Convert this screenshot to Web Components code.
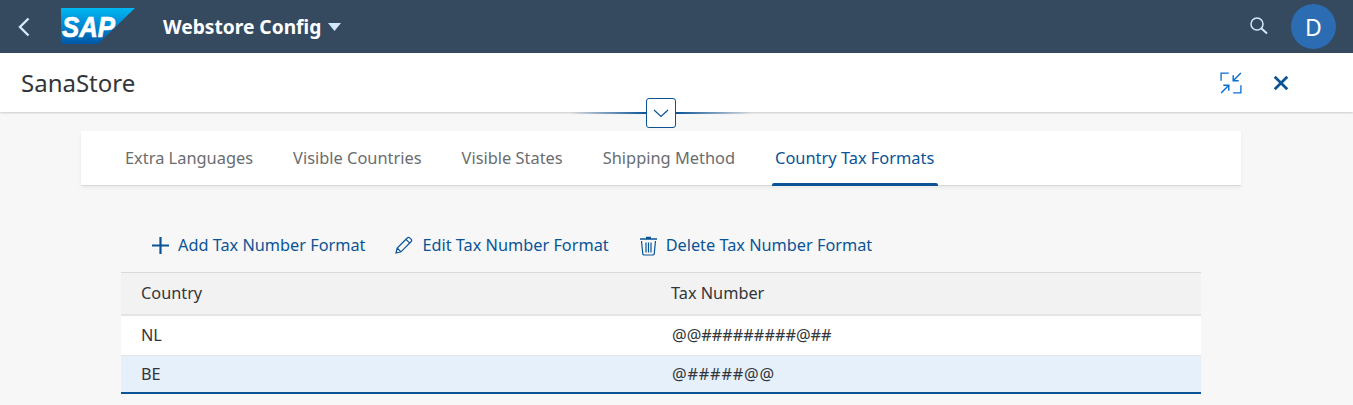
<!DOCTYPE html>
<html>
<head>
<meta charset="utf-8">
<title>Webstore Config</title>
<style>
    html, body { margin: 0; height: 100%; overflow: hidden; }
    body { background: #f7f7f7; font-family: "Noto Sans", "Open Sans", sans-serif; }
</style>
</head>
<body>
<shell-bar></shell-bar>
<page-title>SanaStore</page-title>
<object-tabs></object-tabs>
<tax-actions></tax-actions>
<tax-table></tax-table>

<script>
// Helper to keep the element classes short
function define(name, html) {
    customElements.define(name, class extends HTMLElement {
        constructor() {
            super();
            this.attachShadow({ mode: 'open' });
            const template = document.createElement('template');
            template.innerHTML = html;
            this.shadowRoot.appendChild(template.content.cloneNode(true));
        }
    });
}

define('shell-bar', `
    <style>
        :host { display: flex; align-items: center; height: 53px; background: #354a5f; color: #fff; }
        .back { margin-left: 17px; width: 14px; height: 20px; }
        .logo { margin-left: 30px; width: 74px; height: 36px; margin-top: -1px; }
        .name { margin-left: 28px; font-size: 19.2px; font-weight: 700; }
        .caret { margin-left: 7px; width: 13px; height: 8px; }
        .search { margin-left: auto; width: 20px; height: 20px; margin-top: -1px; }
        .avatar { margin: 0 17px 0 22px; width: 45px; height: 45px; border-radius: 50%; background: #2b6cb3;
                  display: flex; align-items: center; justify-content: center; font-size: 23px; }
    </style>
    <svg class="back" viewBox="0 0 14 20"><path d="M11.5 1.5 3 10l8.5 8.5" fill="none" stroke="#d1e8ff" stroke-width="2.4"/></svg>
    <svg class="logo" viewBox="0 0 74 36">
        <defs><linearGradient id="g" x1="0" y1="0" x2="0" y2="1"><stop offset="0" stop-color="#00b8f1"/><stop offset=".4" stop-color="#0090da"/><stop offset="1" stop-color="#0058a8"/></linearGradient></defs>
        <polygon points="0,0 74,0 37,36 0,36" fill="url(#g)"/>
        <text x="1" y="29" font-family="Liberation Sans" font-size="29" font-weight="700" font-style="italic" fill="#fff" stroke="#fff" stroke-width=".7" textLength="53" lengthAdjust="spacingAndGlyphs">SAP</text>
    </svg>
    <span class="name">Webstore Config</span>
    <svg class="caret" viewBox="0 0 13 8"><polygon points="0,0 13,0 6.5,8" fill="#d1e8ff"/></svg>
    <svg class="search" viewBox="0 0 20 20"><circle cx="8" cy="8" r="6" fill="none" stroke="#d1e8ff" stroke-width="1.5"/><path d="M12.5 12.5 18 17.5" stroke="#d1e8ff" stroke-width="2"/></svg>
    <div class="avatar">D</div>
`);

define('page-title', `
    <style>
        :host { display: flex; align-items: center; position: relative; height: 59px; background: #fff; padding-left: 21px;
                font-size: 24px; color: #32363a; box-shadow: 0 1px 2px rgba(0,0,0,.18); z-index: 1; }
        .tools { margin-left: auto; display: flex; align-items: center; gap: 31px; margin-right: 64px; }
        .collapse { position: absolute; left: 570px; width: 182px; top: 45px; height: 30px; display: flex; align-items: center; justify-content: center; }
        .line { flex: 1; height: 2px; }
        .l { background: linear-gradient(to right, rgba(10,84,150,0), #0a5496); }
        .r { background: linear-gradient(to left, rgba(10,84,150,0), #0a5496); }
        .btn { width: 28px; height: 28px; border: 1px solid #0a5496; border-radius: 3px; background: #fff; display: flex; align-items: center; justify-content: center; }
    </style>
    <slot></slot>
    <div class="tools">
        <svg width="22" height="22" viewBox="0 0 20 20" fill="none" stroke="#0a6ed1" stroke-width="1.2">
            <path d="M1 8V1h7M19 12v7h-7"/><path d="M12 8l7-7M12 3v5h5M8 12l-7 7M3 12h5v5" stroke-width="1.3"/>
        </svg>
        <svg width="16" height="16" viewBox="0 0 14 14"><path d="M1.5 1.5l11 11M12.5 1.5l-11 11" stroke="#0a5496" stroke-width="2.4"/></svg>
    </div>
    <div class="collapse">
        <div class="line l"></div>
        <div class="btn"><svg width="16" height="9" viewBox="0 0 16 9"><path d="M1 1l7 6.5L15 1" fill="none" stroke="#0a5496" stroke-width="1.2"/></svg></div>
        <div class="line r"></div>
    </div>
`);

define('object-tabs', `
    <style>
        :host { display: flex; align-items: stretch; gap: 40px; height: 55px; margin: 19px 112px 0 81px; padding-left: 44px; padding-bottom: 1px; box-sizing: border-box;
                background: #fff; border-bottom: 1px solid #d9d9d9; box-shadow: 0 2px 4px rgba(0,0,0,.06);
                font-size: 16.4px; color: #6a6d70; }
        span { display: flex; align-items: center; position: relative; }
        .on { color: #0a5496; }
        .on::after { content: ''; position: absolute; left: -3px; right: -4px; bottom: -2px; height: 3px; background: #0a5496; border-radius: 2px 2px 0 0; }
    </style>
    <span>Extra Languages</span>
    <span>Visible Countries</span>
    <span>Visible States</span>
    <span>Shipping Method</span>
    <span class="on">Country Tax Formats</span>
`);

define('tax-actions', `
    <style>
        :host { display: flex; align-items: center; height: 40px; margin: 39px 0 7px 151px; font-size: 16.3px; color: #0a5496; }
        div { display: flex; align-items: center; gap: 8px; margin-right: 30px; }
        svg { display: block; }
    </style>
    <div><svg width="19" height="19" viewBox="0 0 19 19"><path d="M9.5 1v17M1 9.5h17" stroke="#0a5496" stroke-width="2.2"/></svg><span>Add Tax Number Format</span></div>
    <div style="gap:9px"><svg width="18" height="18" viewBox="0 0 18 18" fill="none" stroke="#0a5496" stroke-width="1.2"><path d="M1 17l1.2-5L12.5 1.8a1.5 1.5 0 0 1 2.2 0l1.5 1.5a1.5 1.5 0 0 1 0 2.2L6 15.8zM2.2 12 6 15.8M11 3.3l3.8 3.8"/></svg><span>Edit Tax Number Format</span></div>
    <div><svg width="19" height="21" viewBox="0 0 19 21" fill="none" stroke="#0a5496" stroke-width="1.2"><path d="M1 4h17M7 2.5h5" stroke-width="1.6"/><path d="M2.5 6l1.3 13a1.5 1.5 0 0 0 1.5 1h8.4a1.5 1.5 0 0 0 1.5-1l1.3-13M7 7.5v10M9.5 7.5v10M12 7.5v10"/></svg><span>Delete Tax Number Format</span></div>
`);

define('tax-table', `
    <style>
        :host { display: block; margin: 0 152px 0 121px; font-size: 16.3px; color: #32363a; }
        .row { display: grid; grid-template-columns: 530px 1fr; align-items: center; padding-left: 20px; box-sizing: border-box; }
        .head { height: 44px; padding-bottom: 2px; background: #f2f2f2; border-top: 1px solid #d9d9d9; border-bottom: 2px solid #e5e5e5; }
        .nl { height: 40px; padding-bottom: 2px; background: #fff; border-bottom: 1px solid #e5e5e5; }
        .be { height: 38px; background: #e5f0fa; border-bottom: 2px solid #0a5496; }
        .mask { margin-left: 1px; }
        .short { letter-spacing: .8px; }
    </style>
    <div class="row head"><span>Country</span><span>Tax Number</span></div>
    <div class="row nl"><span>NL</span><span class="mask">@@#########@##</span></div>
    <div class="row be"><span>BE</span><span class="mask short">@#####@@</span></div>
`);
</script>
</body>
</html>
